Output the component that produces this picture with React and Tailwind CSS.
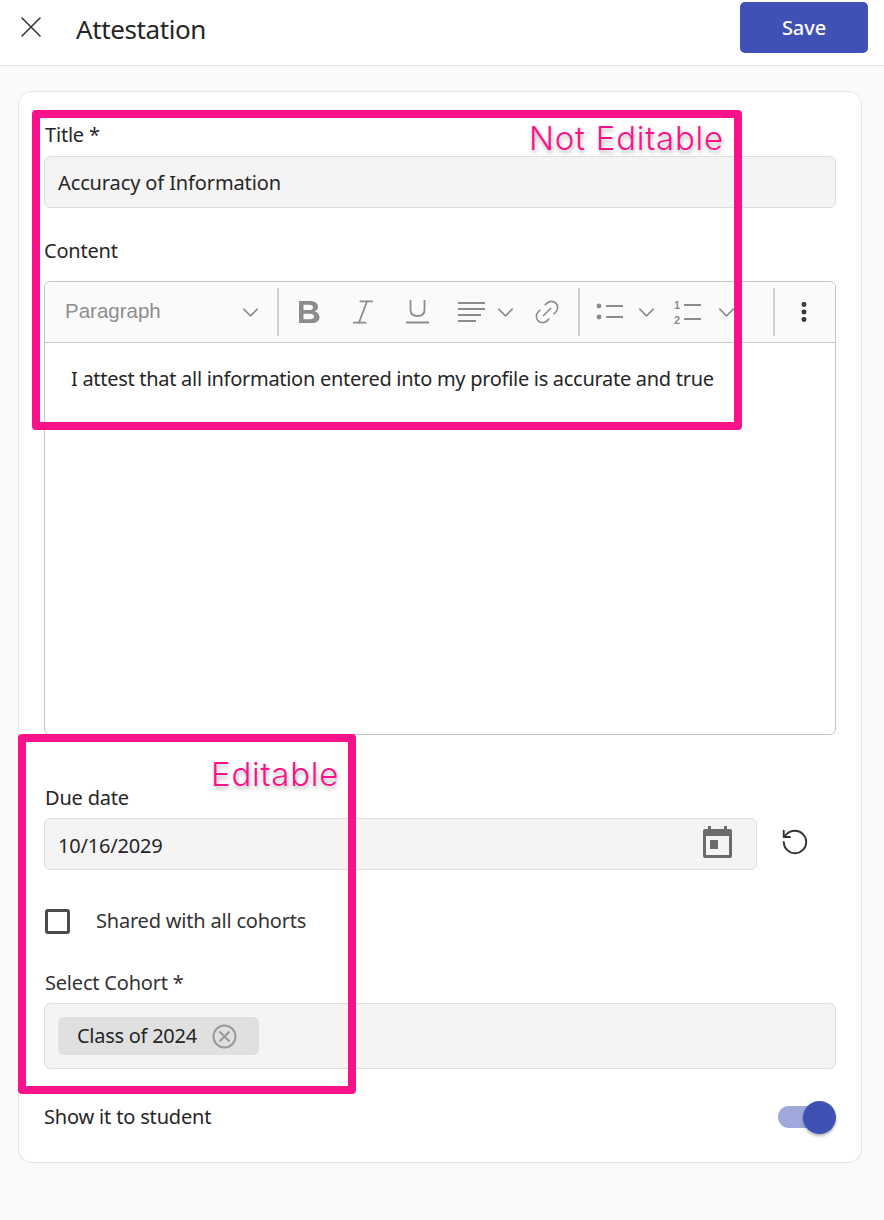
import React from "react";
import { X, ChevronDown, Italic, Link2, EllipsisVertical, RotateCcw } from "lucide-react";

const font = { fontFamily: '"Noto Sans", sans-serif' };

function Chevron() {
  return (
    <div className="flex w-[20px] shrink-0 justify-center">
      <ChevronDown className="size-[27px] shrink-0 text-[#8c8c8c]" strokeWidth={1.4} />
    </div>
  );
}

function Bold() {
  return (
    <svg width="21" height="22" viewBox="0 0 21 22" className="shrink-0 text-[#8c8c8c]">
      <path
        fill="currentColor"
        fillRule="evenodd"
        d="M0 0h11c5 0 8 2.300 8 5.800 0 2.300-1.300 4-3.500 4.800 3 .7 5 2.800 5 5.600 0 3.600-3 5.800-8 5.800H0z M4.500 3.800v5.200h6c2.200 0 3.500-1 3.500-2.600s-1.300-2.600-3.500-2.600z M4.500 12.700v5.500h6.500c2.600 0 4-1 4-2.800s-1.400-2.700-4-2.700z"
      />
    </svg>
  );
}

function UnderlineIcon() {
  return (
    <svg width="23" height="24" viewBox="0 0 23 24" className="shrink-0 text-[#8c8c8c]" fill="none" stroke="currentColor" strokeWidth="1.800">
      <path d="M4.500 0v10c0 4 2.700 6 7 6s7-2 7-6V0" />
      <path d="M0 22.500h23" strokeWidth="2" />
    </svg>
  );
}

function AlignIcon() {
  return (
    <svg width="27" height="22" viewBox="0 0 27 22" className="shrink-0 text-[#8c8c8c]" fill="none" stroke="currentColor" strokeWidth="1.800">
      <path d="M0 2h27M0 8h27M0 14h23M0 20h18" />
    </svg>
  );
}

function BulletList() {
  return (
    <svg width="30" height="24" viewBox="0 0 30 24" className="shrink-0 text-[#8c8c8c]">
      <circle cx="4" cy="6" r="2.400" fill="currentColor" />
      <circle cx="4" cy="17" r="2.400" fill="currentColor" />
      <path d="M11 6h17M11 17h17" stroke="currentColor" strokeWidth="1.800" />
    </svg>
  );
}

function NumberList() {
  return (
    <svg width="30" height="26" viewBox="0 0 30 26" className="shrink-0 text-[#8c8c8c]">
      <text x="1" y="10" fontSize="11" fontWeight="700" fill="currentColor" fontFamily="Liberation Sans">1</text>
      <text x="1" y="25" fontSize="11" fontWeight="700" fill="currentColor" fontFamily="Liberation Sans">2</text>
      <path d="M11 6h17M11 20h17" stroke="currentColor" strokeWidth="1.800" />
    </svg>
  );
}

function CalendarIcon() {
  return (
    <svg width="29" height="32" viewBox="0 0 29 32" className="mb-[4px] shrink-0">
      <path fill="#6b6b6b" d="M5 0h3v3h13V0h3v3h3a2 2 0 0 1 2 2v25a2 2 0 0 1-2 2H2a2 2 0 0 1-2-2V5a2 2 0 0 1 2-2h3z" />
      <rect x="3" y="10" width="23" height="19" fill="#f4f4f4" />
      <rect x="7" y="14" width="8" height="9" fill="#6b6b6b" />
    </svg>
  );
}

function RemoveIcon() {
  return (
    <svg width="25" height="25" viewBox="0 0 25 25" className="ml-[15px] shrink-0 text-[#999]" fill="none" stroke="currentColor" strokeWidth="2">
      <circle cx="12.500" cy="12.500" r="11" />
      <path d="M7.500 7.500l10 10M17.500 7.500l-10 10" />
    </svg>
  );
}

function Divider() {
  return <div className="h-[48px] w-[2px] shrink-0 bg-[#cfcfcf]" />;
}

function Field({ children, className }) {
  return (
    <div className={`flex items-center rounded-[6px] border border-[#dedede] bg-[#f4f4f4] ${className}`}>{children}</div>
  );
}

const labelCls = "block text-[20px] leading-[28px] tracking-[-0.2px]";

export default function App() {
  return (
    <div style={font} className="relative h-[1220px] w-[884px] overflow-hidden bg-[#fafafa] text-[#262626]">
      <header className="flex h-[66px] items-center border-b border-[#e3e3e3] bg-white pl-[13px] pr-[16px]">
        <X className="mb-[11px] size-[36px] text-[#333]" strokeWidth={1.05} />
        <h1 className="mb-[8px] ml-[27px] text-[26px] leading-none tracking-[-0.4px]">Attestation</h1>
        <button className="mb-[10px] ml-auto flex h-[51px] w-[128px] items-center justify-center rounded-[5px] bg-[#3f51b5] text-[20px] font-medium tracking-[-0.1px] text-white">
          Save
        </button>
      </header>

      <main className="ml-[18px] mt-[25px] h-[1072px] w-[844px] rounded-[14px] border border-[#e4e4e4] bg-white px-[25px]">
        <label className={`mt-[29px] pl-[1px] ${labelCls}`}>Title *</label>
        <Field className="mt-[7px] h-[52px] pl-[13px] pt-[2px] text-[20px] tracking-[-0.12px]">Accuracy of Information</Field>

        <label className={`mt-[29px] ${labelCls}`}>Content</label>
        <div className="mt-[16px] h-[454px] overflow-hidden rounded-[6px] border border-[#c4c4c4]">
          <div className="flex h-[61px] items-center border-b border-[#c9c9c9] bg-[#fafafa]">
            <span className="mb-[2px] ml-[20px] w-[175px] shrink-0 text-[20.5px] text-[#8e8e8e]" style={{ fontFamily: '"Liberation Sans", sans-serif' }}>Paragraph</span>
            <Chevron />
            <div className="ml-[17px]"><Divider /></div>
            <div className="ml-[20px]"><Bold /></div>
            <Italic className="ml-[27px] size-[32px] shrink-0 text-[#8c8c8c]" strokeWidth={1.3} />
            <div className="ml-[27px]"><UnderlineIcon /></div>
            <div className="ml-[29px]"><AlignIcon /></div>
            <div className="ml-[10px]"><Chevron /></div>
            <Link2 className="ml-[17px] size-[30px] shrink-0 -rotate-45 text-[#8c8c8c]" strokeWidth={1.3} />
            <div className="ml-[16px]"><Divider /></div>
            <div className="ml-[14.5px]"><BulletList /></div>
            <div className="ml-[11.5px]"><Chevron /></div>
            <div className="ml-[17px]"><NumberList /></div>
            <div className="ml-[13px]"><Chevron /></div>
            <div className="ml-[37px]"><Divider /></div>
            <EllipsisVertical className="ml-[16px] size-[26px] shrink-0 text-[#333]" strokeWidth={2.600} />
          </div>
          <p className="pl-[26px] pt-[22px] text-[20px] leading-[28px] tracking-[-0.29px]">
            I attest that all information entered into my profile is accurate and true
          </p>
        </div>

        <label className={`mt-[49px] pl-[1px] ${labelCls}`}>Due date</label>
        <div className="mt-[6px] flex items-center">
          <Field className="h-[52px] w-[713px] justify-between pl-[13px] pr-[24px] text-[20px] tracking-[-0.2px]">
            <span className="pt-[4px]">10/16/2029</span>
            <CalendarIcon />
          </Field>
          <RotateCcw className="mb-[4px] ml-[23px] size-[30px] text-[#333]" strokeWidth={1.5} />
        </div>

        <div className="mt-[36px] flex items-center">
          <div className="ml-[1px] size-[25px] rounded-[3px] border-[3px] border-[#4a4a4a]" />
          <span className="ml-[26px] text-[20px] tracking-[-0.2px] text-[#333]">Shared with all cohorts</span>
        </div>

        <label className={`mt-[33px] pl-[1px] text-[#333] ${labelCls}`}>Select Cohort *</label>
        <Field className="mt-[6px] h-[66px] pl-[13px]">
          <div className="flex h-[38px] w-[201px] items-center rounded-[6px] bg-[#e0e0e0] pl-[19px] text-[20px] tracking-[-0.27px]">
            Class of 2024
            <RemoveIcon />
          </div>
        </Field>

        <div className="mt-[33px] flex items-center justify-between">
          <span className="text-[20px] tracking-[-0.17px]">Show it to student</span>
          <div className="relative mr-[10px] h-[22px] w-[48px] rounded-full bg-[#9fa8da]">
            <div className="absolute right-[-10px] top-[-5px] size-[33px] rounded-full bg-[#3f51b5] shadow-[0_2px_3px_rgba(0,0,0,0.3)]" />
          </div>
        </div>
      </main>

      <div className="absolute left-[32px] top-[110px] h-[320px] w-[710px] rounded-[4px] border-[8px] border-[#fb1189]" />
      <div className="absolute left-[18px] top-[734px] h-[360px] w-[338px] rounded-[4px] border-[8px] border-[#fb1189]" />
      <span className="absolute left-[529px] top-[116px] text-[33px] leading-[44px] tracking-[0.75px] text-[#fb1189] [text-shadow:1px_3px_4px_rgba(0,0,0,0.3)]" style={{ fontFamily: 'Inter, sans-serif', fontWeight: 300 }}>
        Not Editable
      </span>
      <span className="absolute left-[211px] top-[752px] text-[33px] leading-[44px] tracking-[0.75px] text-[#fb1189] [text-shadow:1px_3px_4px_rgba(0,0,0,0.3)]" style={{ fontFamily: 'Inter, sans-serif', fontWeight: 300 }}>
        Editable
      </span>
    </div>
  );
}
